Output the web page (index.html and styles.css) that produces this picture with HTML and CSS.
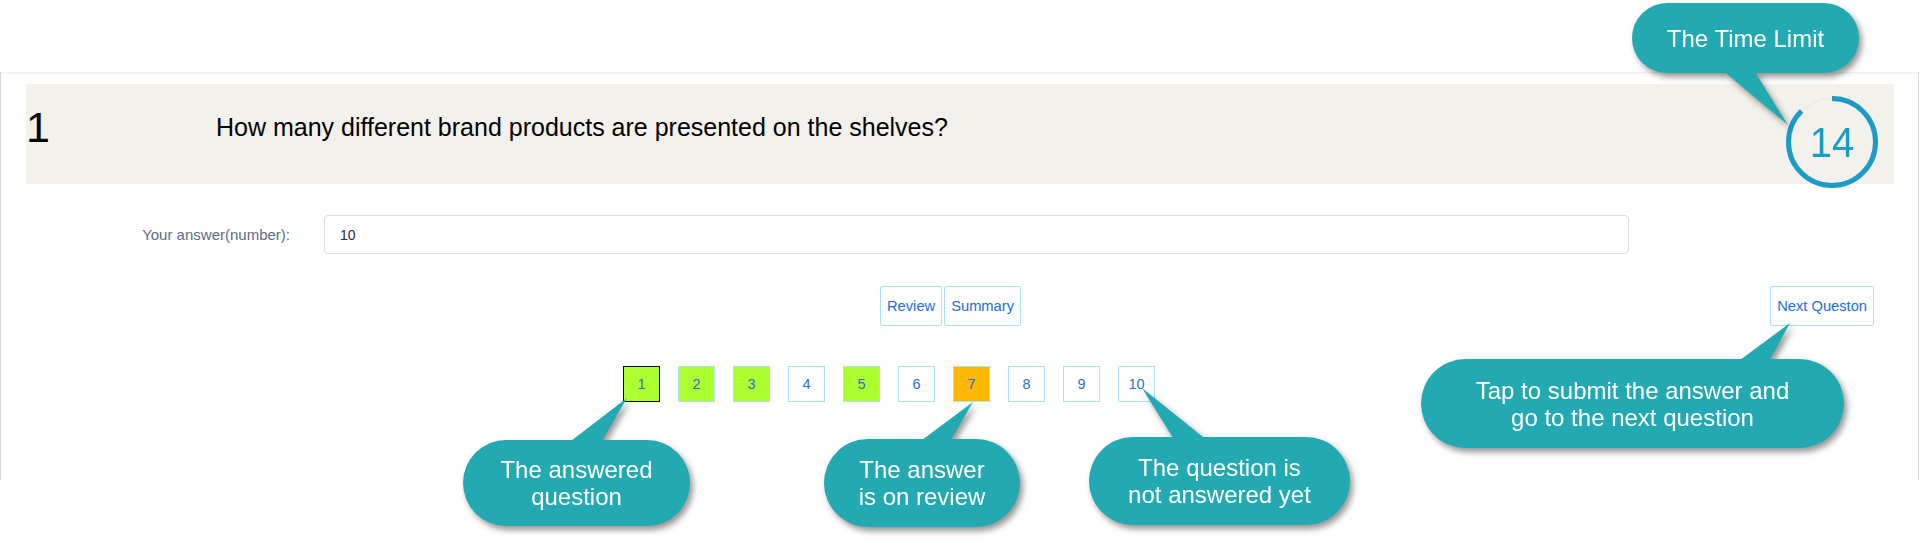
FILE: index.html
```html
<!DOCTYPE html>
<html lang="en">
<head>
<meta charset="utf-8">
<title>Quiz</title>
<link rel="stylesheet" href="styles.css">
</head>
<body>
<div class="page">
  <header class="topbar"></header>
  <main class="main">
    <section class="question">
      <div class="qnum">1</div>
      <div class="qtext">How many different brand products are presented on the shelves?</div>
      <div class="timer">
        <svg class="ring" viewBox="0 0 92 92" width="92" height="92">
          <circle class="track" cx="46" cy="46" r="43.5"/>
          <circle class="progress" cx="46" cy="46" r="43.5" stroke-dasharray="239.2 273.3" transform="rotate(-90 46 46)"/>
        </svg>
        <span class="timer-value">14</span>
      </div>
    </section>

    <div class="answer-row">
      <label class="answer-label" for="answer">Your answer(number):</label>
      <input class="answer-input" id="answer" type="text" value="10">
    </div>

    <div class="actions">
      <div class="btn-group">
        <button class="btn">Review</button>
        <button class="btn">Summary</button>
      </div>
      <button class="btn next">Next Queston</button>
    </div>

    <nav class="pager">
      <span class="sq answered current">1</span>
      <span class="sq answered">2</span>
      <span class="sq answered">3</span>
      <span class="sq">4</span>
      <span class="sq answered">5</span>
      <span class="sq">6</span>
      <span class="sq review">7</span>
      <span class="sq">8</span>
      <span class="sq">9</span>
      <span class="sq">10</span>
    </nav>
  </main>

  <div class="callout c-time">
    <svg class="tail" width="1" height="1"><polygon points="89,66 121,66 156,122"/></svg>
    <div class="bubble">The Time Limit</div>
  </div>
  <div class="callout c-answered">
    <svg class="tail" width="1" height="1"><polygon points="104,4 137,4 164,-42"/></svg>
    <div class="bubble">The answered<br>question</div>
  </div>
  <div class="callout c-review">
    <svg class="tail" width="1" height="1"><polygon points="94,4 125,4 149,-37"/></svg>
    <div class="bubble">The answer<br>is on review</div>
  </div>
  <div class="callout c-notyet">
    <svg class="tail" width="1" height="1"><polygon points="86,4 119,4 53,-49"/></svg>
    <div class="bubble">The question is<br>not answered yet</div>
  </div>
  <div class="callout c-tap">
    <svg class="tail" width="1" height="1"><polygon points="315,4 347,4 369,-36"/></svg>
    <div class="bubble">Tap to submit the answer and<br>go to the next question</div>
  </div>
</div>
</body>
</html>
```

FILE: styles.css
```css
* { box-sizing: border-box; }

html, body {
  margin: 0;
  padding: 0;
  background: #ffffff;
}

body {
  font-family: "Liberation Sans", Arial, sans-serif;
}

.page {
  position: relative;
  width: 1920px;
  height: 550px;
  overflow: hidden;
}

.topbar {
  height: 73px;
  border-bottom: 1px solid #f0f0f0;
  box-shadow: 0 1px 2px rgba(0, 0, 0, 0.04);
}

.main {
  width: 1919px;
  height: 408px;
  margin-top: -1px;
  border-left: 1px solid #d6d6d6;
  border-right: 1px solid #d6d6d6;
  padding-top: 12px;
}

/* Question header */
.question {
  display: flex;
  align-items: flex-start;
  height: 100px;
  margin: 0 24px 0 25px;
  background: #f2f1eb;
}

.qnum {
  width: 190px;
  padding-top: 19px;
  font-size: 43px;
  line-height: 49px;
  color: #000;
}

.qtext {
  margin-top: 29px;
  font-size: 25px;
  line-height: 29px;
  color: #000;
}

.timer {
  position: relative;
  width: 92px;
  height: 92px;
  margin: 12px 16px 0 auto;
  display: flex;
  align-items: center;
  justify-content: center;
}

.ring {
  position: absolute;
  left: 0;
  top: 0;
}

.ring circle {
  fill: none;
}

.ring .track {
  stroke: #e9e8e2;
  stroke-width: 1.5;
}

.ring .progress {
  stroke: #1b9bc6;
  stroke-width: 5;
}

.timer-value {
  position: relative;
  font-size: 40px;
  line-height: 1;
  color: #1b9bc6;
  transform: scaleY(1.08);
}

/* Answer row */
.answer-row {
  display: flex;
  align-items: center;
  margin-top: 31px;
  padding-left: 25px;
}

.answer-label {
  width: 264px;
  text-align: right;
  font-size: 15px;
  color: #5f6b84;
}

.answer-input {
  width: 1305px;
  height: 39px;
  margin: 0 0 0 34px;
  padding: 0 0 0 15px;
  border: 1px solid #dcdae7;
  border-radius: 4px;
  font-family: "Liberation Sans", Arial, sans-serif;
  font-size: 14px;
  color: #2b2b3b;
  background: #fff;
}

/* Buttons */
.actions {
  display: flex;
  align-items: flex-start;
  margin-top: 32px;
  padding: 0 44px 0 879px;
}

.btn-group {
  display: flex;
  gap: 2px;
}

.btn {
  height: 40px;
  padding: 0 6px;
  border: 1px solid #a9e2f6;
  border-radius: 2px;
  background: #fff;
  font-family: "Liberation Sans", Arial, sans-serif;
  font-size: 14.7px;
  color: #1c6fd6;
}

.next {
  margin-left: auto;
}

/* Question pager */
.pager {
  display: flex;
  gap: 18px;
  margin-top: 40px;
  padding-left: 622px;
}

.sq {
  width: 37px;
  height: 36px;
  display: flex;
  align-items: center;
  justify-content: center;
  border: 1px solid #a9e2f6;
  background: #fff;
  font-size: 14.5px;
  color: #2b6fd3;
}

.sq.answered {
  background: #adff2f;
}

.sq.review {
  background: #ffb800;
}

.sq.current {
  border-color: #000;
}

/* Annotation callouts */
.callout {
  position: absolute;
  filter: drop-shadow(3px 4px 3px rgba(0, 0, 0, 0.42));
}

.callout .tail {
  position: absolute;
  left: 0;
  top: 0;
  overflow: visible;
}

.callout .tail polygon {
  fill: #22a9b1;
}

.callout .bubble {
  position: relative;
  height: 100%;
  display: flex;
  align-items: center;
  justify-content: center;
  text-align: center;
  background: #22a9b1;
  border-radius: 999px;
  color: #fff;
  font-size: 24px;
  line-height: 27px;
}

.c-time {
  left: 1632px;
  top: 3px;
  width: 227px;
  height: 70px;
}

.c-answered {
  left: 463px;
  top: 440px;
  width: 227px;
  height: 86px;
}

.c-review {
  left: 824px;
  top: 439px;
  width: 196px;
  height: 88px;
}

.c-notyet {
  left: 1089px;
  top: 437px;
  width: 261px;
  height: 88px;
}

.c-tap {
  left: 1421px;
  top: 359px;
  width: 423px;
  height: 89px;
}
```
